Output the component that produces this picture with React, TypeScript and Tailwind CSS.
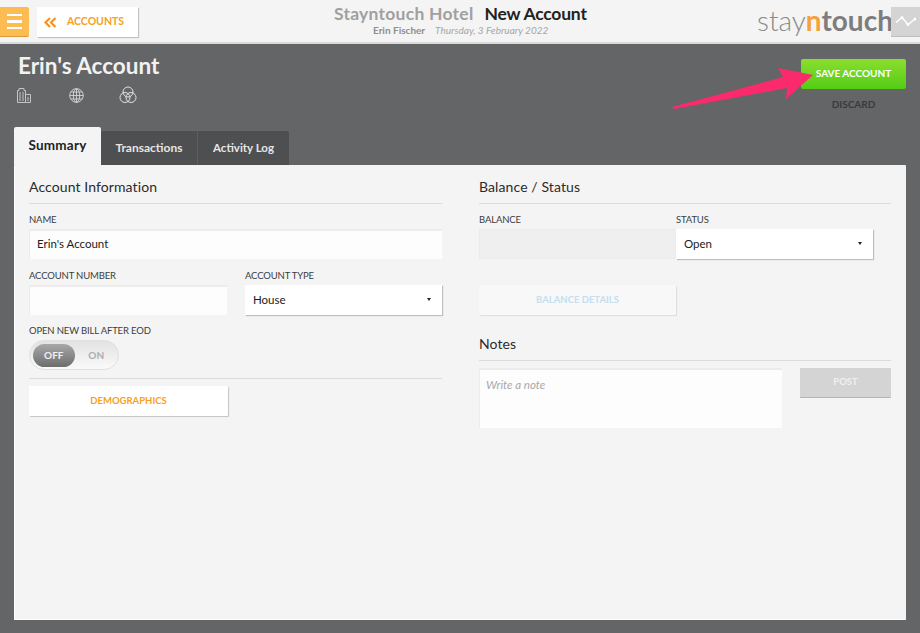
import React from "react";

function Label({ children }: { children: React.ReactNode }) {
  return <div className="h-[19px] text-[9.5px] leading-[20px] text-[#3c3c3c] uppercase whitespace-nowrap tracking-[-0.15px]">{children}</div>;
}

function Caret() {
  return <span className="w-0 h-0 border-x-[2.5px] border-x-transparent border-t-[3px] border-t-[#222]" />;
}

function Select({ value, className }: { value: string; className: string }) {
  return (
    <div className={`h-[30px] bg-white flex items-center justify-between pl-[8px] pr-[11px] pb-[1px] text-[11.5px] text-[#222] shadow-[1px_1px_1px_rgba(0,0,0,0.22)] ${className}`}>
      <span>{value}</span>
      <Caret />
    </div>
  );
}

function Field({ className, children }: { className: string; children?: React.ReactNode }) {
  return <div className={`h-[30px] bg-[#fdfdfd] flex items-center pl-[7px] pb-[2px] text-[11.5px] text-[#222] border-t-2 border-l border-[#ececec] ${className}`}>{children}</div>;
}

function Heading({ children }: { children: React.ReactNode }) {
  return <div className="h-[26px] border-b border-[#dcdcdc] text-[14px] leading-[18px] tracking-[0.1px] text-[#2b2b2b]">{children}</div>;
}

function BuildingIcon() {
  return (
    <svg width="14" height="15" viewBox="0 0 14 15" fill="none" stroke="#c4c4c4" strokeWidth="1">
      <path d="M0.5 14.5V2.5H2V0.5H7V2.5H8.5V14.5H0.5Z" />
      <path d="M8.5 6.5H13.5V14.5H8.5" />
      <path d="M3 4V13M6 4V13M11 9V13" />
    </svg>
  );
}

function GlobeIcon() {
  return (
    <svg width="15" height="15" viewBox="0 0 15 15" fill="none" stroke="#d6d6d6" strokeWidth="0.9">
      <circle cx="7.5" cy="7.5" r="6.8" />
      <ellipse cx="7.5" cy="7.5" rx="3.2" ry="6.8" />
      <path d="M7.5 0.7V14.3M0.7 7.5H14.3M1.8 4H13.2M1.8 11H13.2" />
    </svg>
  );
}

function CirclesIcon() {
  return (
    <svg width="18" height="18" viewBox="0 0 18 18" fill="none" stroke="#e2e2e2" strokeWidth="1">
      <circle cx="9" cy="6" r="5" />
      <circle cx="6" cy="11.5" r="5" />
      <circle cx="12" cy="11.5" r="5" />
    </svg>
  );
}

export default function App() {
  return (
    <div className="relative w-[920px] h-[633px] overflow-hidden flex flex-col bg-[#646567] font-['Lato',sans-serif]">
      {/* Top bar */}
      <header className="relative h-[44px] shrink-0 bg-[#f4f4f4] border-b-2 border-[#d9d9d9] flex items-start">
        <div className="mt-[7px] w-[29px] h-[30px] bg-[#fcbc52] border-b border-[#d89a38] rounded-r-[2px] flex flex-col items-center justify-center gap-[4px]">
          <span className="block w-[15px] h-[2.5px] bg-white" />
          <span className="block w-[15px] h-[2.5px] bg-white" />
          <span className="block w-[15px] h-[2.5px] bg-white" />
        </div>
        <div className="mt-[7px] ml-[8px] w-[101px] h-[30px] bg-white shadow-[1px_1px_1px_rgba(0,0,0,0.2)] flex items-center pl-[7px] gap-[10px]">
          <svg width="13" height="11" viewBox="0 0 13 11" fill="none" stroke="#f6921e" strokeWidth="2.2">
            <path d="M6 1L1.5 5.5L6 10" />
            <path d="M11.5 1L7 5.5L11.5 10" />
          </svg>
          <span className="text-[10.5px] text-[#f6a01e] font-bold -mt-[1px]">ACCOUNTS</span>
        </div>
        <div className="absolute left-[334px] top-[3px] w-[270px]">
          <div className="flex items-baseline gap-[11px] text-[17.5px] leading-[22px] font-bold whitespace-nowrap">
            <span className="text-[#a0a0a0] tracking-[0.25px]">Stayntouch Hotel</span>
            <span className="text-[#222] tracking-[-0.2px]">New Account</span>
          </div>
          <div className="flex items-baseline gap-[10px] pl-[39px] text-[10px] leading-[11px] whitespace-nowrap">
            <span className="text-[#8e8e8e] font-bold">Erin Fischer</span>
            <span className="text-[#a6a6a6] italic">Thursday, 3 February 2022</span>
          </div>
        </div>
        <div className="absolute left-[757px] top-[2px] text-[28px] leading-[36px] text-[#8a8a8a] whitespace-nowrap">
          <span className="font-light">stay</span>
          <span className="font-bold text-[#f6a23c]">n</span>
          <span className="font-bold text-[#7d7d7d]">touch</span>
        </div>
        <div className="absolute right-0 top-[7px] w-[29px] h-[30px] bg-[#d4d4d4] border-b border-[#bdbdbd] flex items-center justify-center">
          <svg width="21" height="11" viewBox="0 0 21 11" fill="#ffffff" stroke="#ffffff" strokeWidth="1.4">
            <path d="M1 6.5L7 1.5L13 8.5L20 3" fill="none" />
            <circle cx="7" cy="1.5" r="0.8" />
            <circle cx="13" cy="8.5" r="0.8" />
            <circle cx="20" cy="3" r="0.8" />
          </svg>
        </div>
      </header>

      {/* Title area */}
      <div className="relative h-[83px] shrink-0">
        <h1 className="absolute left-[18px] top-[8px] text-[22.5px] leading-[28px] font-bold text-[#f2f2f2] whitespace-nowrap">Erin's Account</h1>
        <div className="absolute left-[17px] top-[42px] flex items-center">
          <div className="w-[52px]"><BuildingIcon /></div>
          <div className="w-[50px]"><GlobeIcon /></div>
          <CirclesIcon />
        </div>
        <button className="absolute left-[801px] top-[15px] w-[105px] h-[30px] pb-[1px] rounded-[2px] bg-gradient-to-b from-[#8ade2e] to-[#52cc14] text-[10px] font-bold text-white">SAVE ACCOUNT</button>
        <div className="absolute left-[801px] top-[52px] w-[105px] text-center text-[10px] font-bold leading-[16px] text-[#3a3a3c]">DISCARD</div>
      </div>

      {/* Tabs */}
      <div className="flex items-end h-[38px] shrink-0 pl-[14px]">
        <div className="w-[87px] h-[38px] bg-[#f4f4f4] rounded-t-[2px] flex items-center justify-center pb-[2px] text-[13.5px] font-bold tracking-[0.2px] text-[#222]">Summary</div>
        <div className="w-[97px] h-[34px] bg-[#4e4f51] rounded-tl-[2px] flex items-center justify-center text-[12px] font-bold text-[#e6e6e6] border-r border-[#5c5d5f]">Transactions</div>
        <div className="w-[91px] h-[34px] bg-[#4e4f51] rounded-tr-[2px] flex items-center justify-center text-[11.5px] font-bold text-[#e6e6e6]">Activity Log</div>
      </div>

      {/* Panel */}
      <main className="ml-[14px] w-[892px] h-[455px] bg-[#f4f4f4] border-l border-b border-white rounded-[1px] pl-[14px] pr-[15px] pt-[13px] grid grid-cols-[413px_412px] gap-x-[37px] content-start">
        {/* Left */}
        <section>
          <Heading>Account Information</Heading>
          <div className="mt-[6px]"><Label>NAME</Label></div>
          <Field className="w-[413px]">Erin's Account</Field>
          <div className="mt-[7px] flex gap-[18px]">
            <div>
              <Label>ACCOUNT NUMBER</Label>
              <Field className="w-[198px]" />
            </div>
            <div>
              <Label>ACCOUNT TYPE</Label>
              <Select value="House" className="w-[197px]" />
            </div>
          </div>
          <div className="mt-[6px]"><Label>OPEN NEW BILL AFTER EOD</Label></div>
          <div className="w-[90px] h-[30px] rounded-full bg-gradient-to-b from-[#e2e2e2] to-[#fafafa] border border-[#e0e0e0] flex items-center pl-[3px]">
            <span className="w-[42px] h-[23px] rounded-full bg-gradient-to-b from-[#a8a8a8] to-[#6e6e6e] flex items-center justify-center text-[10px] font-bold text-[#f0f0f0]">OFF</span>
            <span className="w-[44px] text-center text-[10px] font-bold text-[#adadad]">ON</span>
          </div>
          <div className="mt-[8px] h-px w-[413px] bg-[#dcdcdc]" />
          <button className="mt-[7px] block w-[199px] h-[30px] pt-[1px] bg-white rounded-[1px] shadow-[1px_1px_1px_rgba(0,0,0,0.2)] text-[9.5px] font-bold text-[#f6a01e]">DEMOGRAPHICS</button>
        </section>

        {/* Right */}
        <section>
          <Heading>Balance / Status</Heading>
          <div className="mt-[6px] flex">
            <div>
              <Label>BALANCE</Label>
              <div className="w-[197px] h-[30px] bg-[#efefef] border border-[#ebebeb]" />
            </div>
            <div>
              <Label>STATUS</Label>
              <Select value="Open" className="w-[197px]" />
            </div>
          </div>
          <button className="mt-[26px] block w-[197px] h-[30px] bg-[#f8f8f8] rounded-[1px] shadow-[1px_1px_1px_rgba(0,0,0,0.1)] text-[9.5px] font-bold text-[#c4dff0]">BALANCE DETAILS</button>
          <div className="mt-[20px]"><Heading>Notes</Heading></div>
          <div className="mt-[7px] flex justify-between items-start">
            <div className="w-[303px] h-[60px] bg-[#fdfdfd] border-t-2 border-l border-[#ececec] pl-[6px] pt-[6px] text-[11.5px] italic text-[#a8a8a8]">Write a note</div>
            <button className="w-[91px] h-[30px] bg-[#d4d4d4] rounded-[1px] border-b border-[#b4b4b4] text-[9.5px] font-bold text-[#f0f0f0]">POST</button>
          </div>
        </section>
      </main>

      {/* Annotation arrow */}
      <svg className="absolute left-[665px] top-[60px] pointer-events-none" width="150" height="55" viewBox="0 0 150 55">
        <path d="M9 49L7 47L118 17L113 8L148 15L121 39L122 28Z" fill="#fb2a6c" />
      </svg>
    </div>
  );
}
